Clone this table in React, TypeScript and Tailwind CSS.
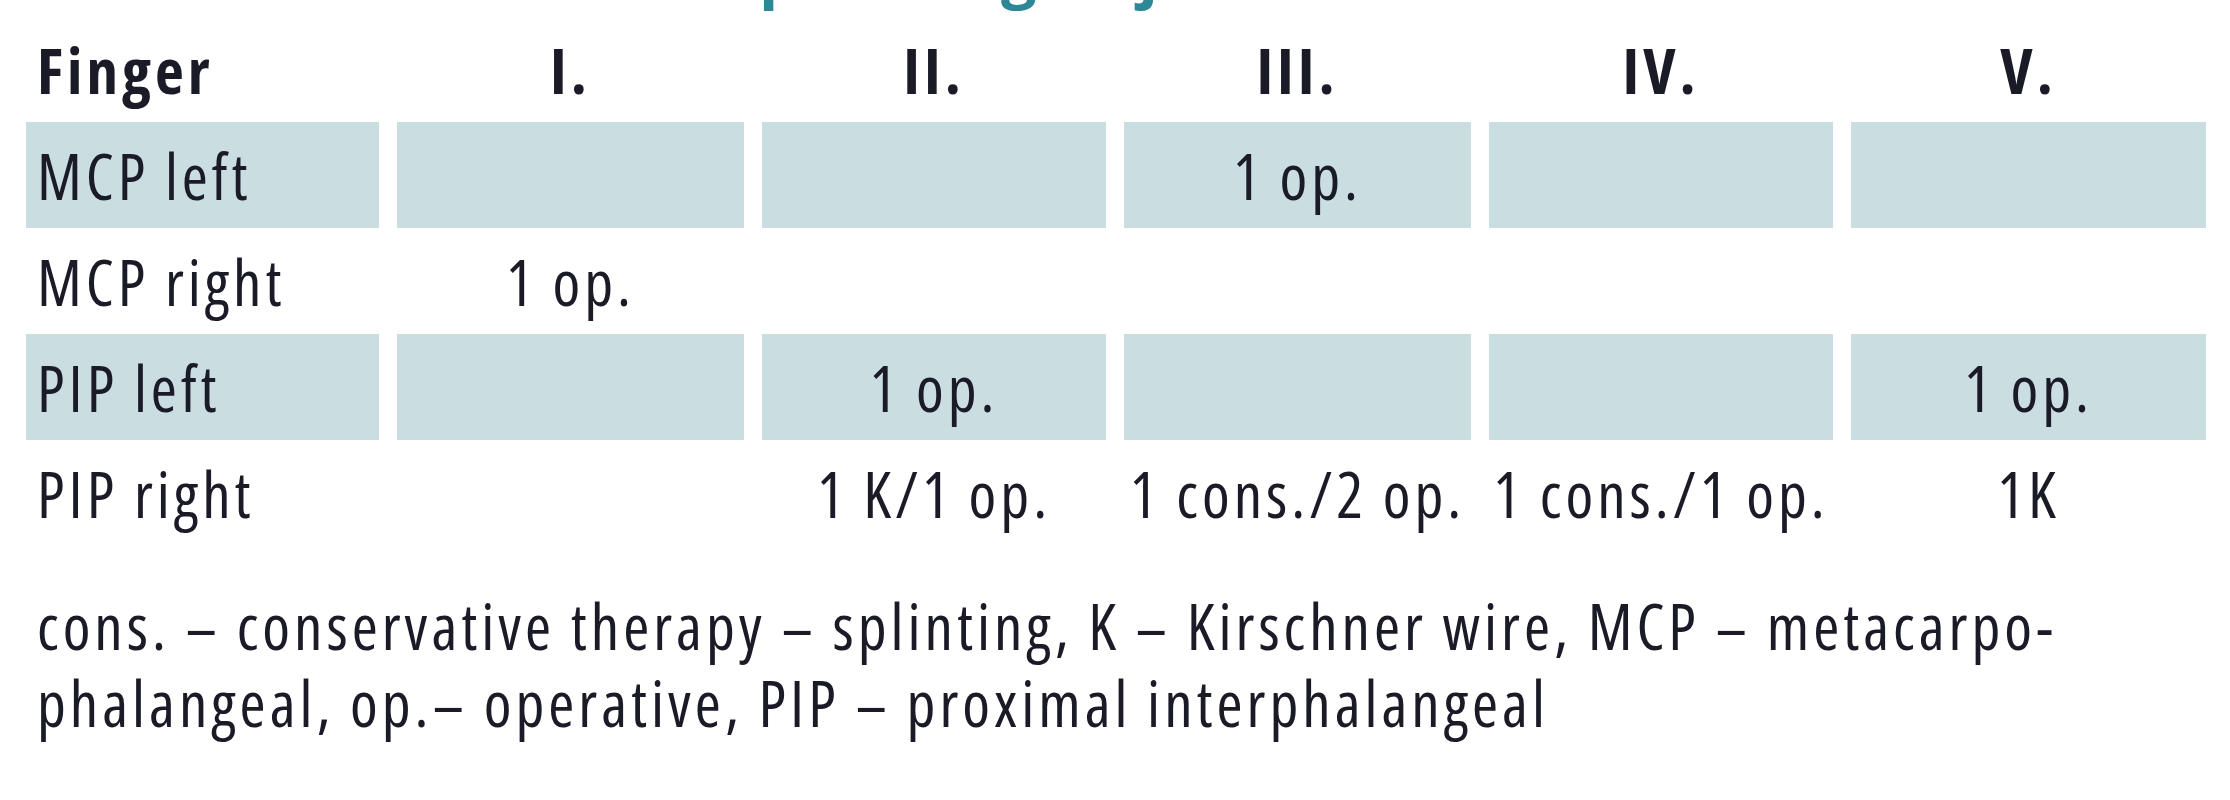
import React from "react";

type Row = { label: string; shaded: boolean; cells: string[] };

const rows: Row[] = [
  { label: "MCP left", shaded: true, cells: ["", "", "1 op.", "", ""] },
  { label: "MCP right", shaded: false, cells: ["1 op.", "", "", "", ""] },
  { label: "PIP left", shaded: true, cells: ["", "1 op.", "", "", "1 op."] },
  { label: "PIP right", shaded: false, cells: ["", "1 K/1 op.", "1 cons./2 op.", "1 cons./1 op.", "1K"] },
];

const headers = ["I.", "II.", "III.", "IV.", "V."];

export default function App() {
  return (
    <div className="w-[2230px] h-[800px] bg-white overflow-hidden font-['Open_Sans',sans-serif] font-stretch-condensed text-[#1b1b27]">
      <div className="h-[12px] overflow-hidden">
        <div className="-mt-[60px] flex text-[63px] leading-[63px] font-bold font-stretch-normal tracking-[5px] text-[#2e8794] whitespace-nowrap">
          <span className="w-[759px] shrink-0 text-right">Treatment&nbsp;</span>
          <span>per finger joint</span>
        </div>
      </div>

      <div className="ml-[26px] mt-[4px] w-[2180px] grid grid-cols-[353px_347px_344px_347px_344px_355px] gap-x-[18px] text-[63px] leading-none tracking-[4px]">
        <div className="h-[106px] flex items-center pl-[11px] font-bold">Finger</div>
        {headers.map((h) => (
          <div key={h} className="h-[106px] flex items-center justify-center font-bold">
            {h}
          </div>
        ))}

        {rows.map((r) => (
          <React.Fragment key={r.label}>
            <div className={`h-[106px] flex items-center pl-[11px] whitespace-nowrap ${r.shaded ? "bg-[#cadde0]" : ""}`}>
              {r.label}
            </div>
            {r.cells.map((c, i) => (
              <div
                key={i}
                className={`h-[106px] flex items-center justify-center whitespace-nowrap ${r.shaded ? "bg-[#cadde0]" : ""}`}
              >
                {c}
              </div>
            ))}
          </React.Fragment>
        ))}
      </div>

      <div className="ml-[37px] mt-[41px] text-[63px] leading-[77px] tracking-[4px] whitespace-nowrap">
        cons. – conservative therapy – splinting, K – Kirschner wire, MCP – metacarpo-
        <br />
        phalangeal, op.– operative, PIP – proximal interphalangeal
      </div>
    </div>
  );
}
